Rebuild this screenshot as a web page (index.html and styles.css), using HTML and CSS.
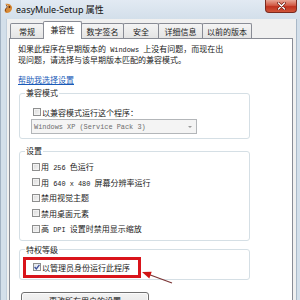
FILE: index.html
```html
<!DOCTYPE html>
<html lang="zh-CN">
<head>
<meta charset="utf-8">
<title>easyMule-Setup 属性</title>
<link rel="stylesheet" href="styles.css">
</head>
<body>
<div class="window">
  <div class="titlebar">
    <svg class="app-icon" width="10" height="11" viewBox="0 0 10 11">
      <path d="M2 1 C5 0 8 1 9 4 C9.5 7 7 10 4 10 C2 10 1 8 2 6 C3 5 5 5 5 3 C5 2 3 2 2 1Z" fill="#d98a35"/>
      <path d="M3 2.5 C4.5 2.5 4.5 4 3.5 5 C2.5 6 2 7.5 3 8.5" fill="none" stroke="#7a3d12" stroke-width="1"/>
      <circle cx="6.5" cy="4" r="0.9" fill="#5a2a0a"/>
    </svg>
    <span class="title">easyMule-Setup 属性</span>
    <div class="close">
      <svg width="9" height="8" viewBox="0 0 9 8">
        <path d="M1.5 1 L7.5 7 M7.5 1 L1.5 7" stroke="#6b1a10" stroke-width="2.6" stroke-linecap="round"/>
        <path d="M1.5 1 L7.5 7 M7.5 1 L1.5 7" stroke="#ffffff" stroke-width="1.4" stroke-linecap="round"/>
      </svg>
    </div>
  </div>
  <div class="frame">
    <div class="client">
      <div class="tabs">
        <div class="tab t1">常规</div>
        <div class="tab t2 active">兼容性</div>
        <div class="tab t3">数字签名</div>
        <div class="tab t4">安全</div>
        <div class="tab t5">详细信息</div>
        <div class="tab t6">以前的版本</div>
      </div>
      <div class="panel">
        <p class="intro">如果此程序在早期版本的<span class="lat"> Windows </span>上没有问题，而现在出<br>现问题，请选择与该早期版本匹配的兼容模式。</p>
        <a class="help">帮助我选择设置</a>

        <fieldset class="group g1">
          <legend>兼容模式</legend>
          <div class="rows">
            <label class="check"><span class="box"></span><span>以兼容模式运行这个程序：</span></label>
            <div class="combo"><span class="lat">Windows XP (Service Pack 3)</span><span class="arrow"></span></div>
          </div>
        </fieldset>

        <fieldset class="group g2">
          <legend>设置</legend>
          <div class="rows">
            <label class="check"><span class="box"></span><span>用<span class="lat"> 256 </span>色运行</span></label>
            <label class="check"><span class="box"></span><span>用<span class="lat"> 640 x 480 </span>屏幕分辨率运行</span></label>
            <label class="check"><span class="box"></span><span>禁用视觉主题</span></label>
            <label class="check"><span class="box"></span><span>禁用桌面元素</span></label>
            <label class="check"><span class="box"></span><span>高<span class="lat"> DPI </span>设置时禁用显示缩放</span></label>
          </div>
        </fieldset>

        <fieldset class="group g3">
          <legend>特权等级</legend>
          <div class="rows">
            <label class="check alert"><span class="box checked"><svg width="6" height="6" viewBox="0 0 6 6"><path d="M0.6 3 L2.3 4.9 L5.4 0.8" fill="none" stroke="#3b4f9a" stroke-width="1.3"/></svg></span><span>以管理员身份运行此程序</span></label>
          </div>
        </fieldset>

        <div class="button">更改所有用户的设置</div>
      </div>
    </div>
  </div>
</div>
<svg class="pointer" width="40" height="22" viewBox="0 0 40 22">
  <path d="M11 8.5 L34 17" stroke="#7a3434" stroke-width="1.2"/>
  <path d="M4 6 L13.7 5.8 L11.3 12.4 Z" fill="#d01414"/>
</svg>
</body>
</html>
```

FILE: styles.css
```css
* { box-sizing: border-box; }
html, body { margin: 0; padding: 0; }
body {
  width: 300px;
  height: 300px;
  overflow: hidden;
  background: #d3dfea;
  font-family: "Noto Sans CJK SC", sans-serif;
  font-size: 8px;
  color: #1a1a1a;
}
.window {
  display: flex;
  flex-direction: column;
  height: 300px;
  background: #d3dfea;
  border-left: 1px solid #a2b2c3;
}
.titlebar {
  height: 19px;
  display: flex;
  align-items: flex-start;
  background: linear-gradient(#e2eaf3, #d3dfea);
  flex: none;
}
.app-icon { margin: 3px 0 0 2px; flex: none; }
.title {
  margin-left: 3px;
  line-height: 19px;
  font-family: "Noto Sans", "Noto Sans CJK SC", sans-serif;
  font-size: 9px;
  color: #111;
}
.close {
  margin-left: auto;
  margin-right: 3px;
  width: 32px;
  height: 13px;
  display: flex;
  align-items: center;
  justify-content: center;
  background: linear-gradient(#e8a595, #d15a45 45%, #c0321f 55%, #d0553a);
  border: 1px solid #7b2a1e;
  border-top: none;
  border-radius: 0 0 4px 4px;
}
.frame {
  flex: 1;
  display: flex;
  padding: 0 3px 0 5px;
  min-height: 0;
}
.client {
  flex: 1;
  display: flex;
  flex-direction: column;
  background: #f0f0f0;
  padding: 0 3px 0 2px;
  border-right: 1px solid #a9b8c7;
  border-left: 1px solid #c2cfdc;
}
.tabs {
  height: 19px;
  display: flex;
  align-items: flex-end;
  padding-left: 1px;
  flex: none;
}
.tab {
  height: 15px;
  border: 1px solid #898c95;
  border-bottom: none;
  margin-right: -1px;
  border-radius: 2px 2px 0 0;
  background: linear-gradient(#f4f4f4, #e4e4e4);
  display: flex;
  align-items: center;
  justify-content: center;
  line-height: 10px;
  padding-top: 1px;
}
.tab.active {
  height: 18px;
  margin-bottom: -1px;
  background: #ffffff;
  position: relative;
  z-index: 1;
  padding-top: 0;
  padding-bottom: 2px;
}
.t1 { width: 34px; }
.t2 { width: 39px; }
.t3 { width: 43px; }
.t4 { width: 36px; }
.t5 { width: 45px; }
.t6 { width: 50px; }
.panel {
  flex: 1;
  background: #ffffff;
  border: 1px solid #898c95;
  padding: 5px 0 0 8px;
}
.intro {
  margin: 0;
  line-height: 10px;
  white-space: nowrap;
}
.lat {
  font-family: "Liberation Mono", monospace;
  font-size: 6.9px;
}
.help {
  display: block;
  width: fit-content;
  margin-top: 10px;
  line-height: 10px;
  color: #1a5bb8;
  text-decoration: underline;
}
.group {
  margin: 3px 0 0 1px;
  width: 231px;
  min-width: 0;
  padding: 0;
  border: 1px solid #d5dfe5;
  border-radius: 3px;
}
.group legend {
  margin-left: 5px;
  padding: 0 1px;
  line-height: 10px;
}
.g1 .rows { padding: 9px 0 4px 13px; }
.g2 { margin-top: 7px; }
.g2 .rows { padding: 3px 0 3px 12px; }
.g3 { margin-top: 4px; }
.g3 .rows { padding: 2px 0 1px 3px; }
.check {
  display: flex;
  align-items: center;
  height: 10px;
  white-space: nowrap;
}
.g2 .check { height: 15.5px; }
.box {
  width: 8px;
  height: 8px;
  flex: none;
  margin-right: 1px;
  border: 1px solid #8e8f8f;
  background: linear-gradient(135deg, #d8d8d8, #f7f7f7);
  box-shadow: inset 0 0 0 1px #f2f2f2;
  display: flex;
  align-items: center;
  justify-content: center;
}
.box.checked { background: linear-gradient(135deg, #e0e4ec, #fafafa); box-shadow: none; }
.combo {
  margin: 2px 0 0 -2px;
  width: 166px;
  height: 15px;
  border: 1px solid #b3b6b9;
  background: #f4f4f4;
  color: #6d6d6d;
  display: flex;
  align-items: center;
  padding-left: 2px;
}
.arrow {
  margin-left: auto;
  margin-right: 4px;
  width: 0;
  height: 0;
  border-left: 2px solid transparent;
  border-right: 2px solid transparent;
  border-top: 2px solid #9a9a9a;
}
.alert {
  width: 118px;
  height: 21px;
  border: 3px solid #d9141b;
  padding-left: 7px;
}
.button {
  margin: 12px 0 0 3px;
  width: 128px;
  height: 20px;
  border: 1px solid #707070;
  border-radius: 3px;
  background: linear-gradient(#f2f2f2, #ebebeb 50%, #dddddd 50%, #cfcfcf);
  box-shadow: inset 0 0 0 1px #fcfcfc;
  display: flex;
  align-items: center;
  justify-content: center;
  padding-bottom: 2px;
}
.pointer {
  position: absolute;
  left: 138px;
  top: 266px;
}
```
